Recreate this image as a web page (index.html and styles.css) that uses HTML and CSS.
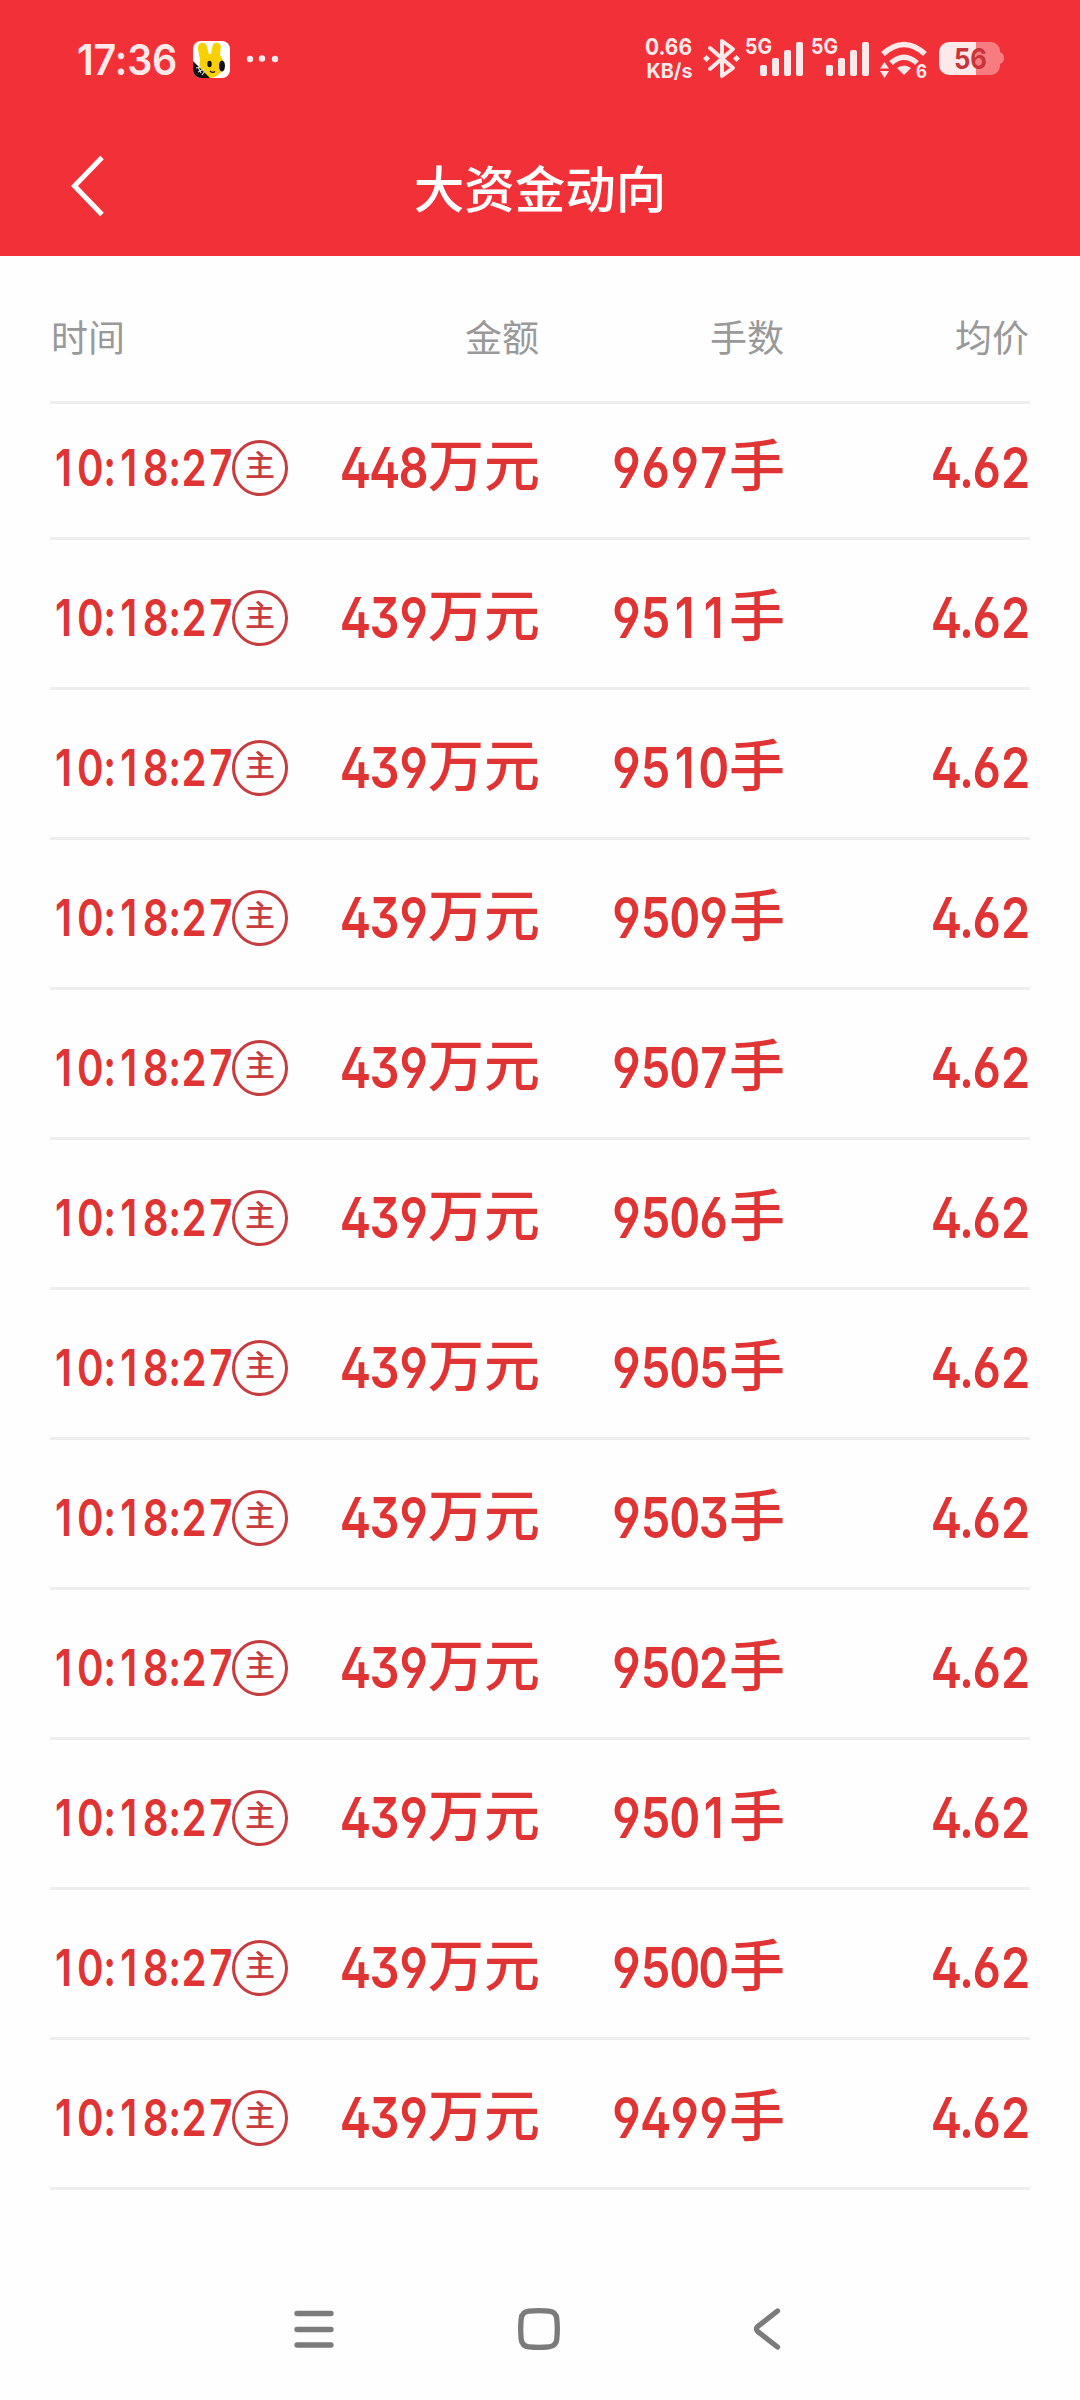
FILE: index.html
```html
<!DOCTYPE html>
<html lang="zh-CN">
<head>
<meta charset="utf-8">
<title>大资金动向</title>
<link rel="stylesheet" href="styles.css">
</head>
<body>
<header class="top">
  <div class="status">
    <span class="clock">17:36</span>
    <svg class="app" width="37" height="37" viewBox="0 0 37 37">
      <defs><clipPath id="r"><rect width="37" height="37" rx="8"/></clipPath></defs>
      <g clip-path="url(#r)">
        <rect width="37" height="37" fill="#fff"/>
        <path d="M7 19C6 13 5 9 5 6.500a4.500 4.500 0 0 1 9-.5l2 7h2l1.500-8a4.200 4.200 0 0 1 8.300.8L27 14c4 5 5 12 1 17-3 4-7 6-12 6C9 37 5 28 7 19z" fill="#f9cf05"/>
        <ellipse cx="16.500" cy="23" rx="2.200" ry="3.200" fill="#111"/>
        <ellipse cx="29" cy="25" rx="3" ry="5.500" fill="#111"/>
        <path d="M17 30q2.500 2.500 5 .5" fill="none" stroke="#111" stroke-width="1.300"/>
        <path d="M0 20 17 37H0z" fill="#111"/>
        <path d="M3 27l5-1M5 31l6-3M9 34l3-4M5 26l3 6" stroke="#ddd" stroke-width="1.100"/>
      </g>
    </svg>
    <svg class="dots" width="33" height="8" viewBox="0 0 33 8"><circle cx="4" cy="4" r="3.200"/><circle cx="16" cy="3.500" r="3.200"/><circle cx="29" cy="4" r="3.200"/></svg>
    <svg class="speed" width="52" height="60" viewBox="-1 -10 52 60"><text x="0" y="17.500" font-size="23" textLength="47" lengthAdjust="spacingAndGlyphs">0.66</text><text x="1.500" y="40.500" font-size="20" textLength="46" lengthAdjust="spacingAndGlyphs">KB/s</text></svg>
    <svg class="bt" width="38" height="42" viewBox="0 0 38 42"><path d="M7 10 30 30 19 38V3l11 8L7 31" fill="none" stroke="#fee9ea" stroke-width="4" stroke-linejoin="round" stroke-linecap="round"/><path d="M3.500 17 7 20.500 3.500 24 0 20.500zM33.500 17 37 20.500 33.500 24 30 20.500z"/></svg>
    <svg class="sig" width="59" height="52" viewBox="0 -10 59 52"><text x="0" y="16.500" font-size="22" textLength="27" lengthAdjust="spacingAndGlyphs">5G</text><rect x="15" y="28" width="7" height="11" rx="2"/><rect x="27" y="21" width="7" height="18" rx="2"/><rect x="39" y="13" width="7" height="26" rx="2"/><rect x="51" y="5" width="7" height="34" rx="2"/></svg>
    <svg class="sig" width="59" height="52" viewBox="0 -10 59 52"><text x="0" y="16.500" font-size="22" textLength="27" lengthAdjust="spacingAndGlyphs">5G</text><rect x="15" y="28" width="7" height="11" rx="2"/><rect x="27" y="21" width="7" height="18" rx="2"/><rect x="39" y="13" width="7" height="26" rx="2"/><rect x="51" y="5" width="7" height="34" rx="2"/></svg>
    <svg class="wifi" width="48" height="46" viewBox="0 0 48 46"><g fill="none" stroke="#fee9ea" stroke-width="5.500"><path d="M3 13Q24-6 45 13"/><path d="M11 22Q24 10.500 37 22"/></g><path d="M17 27q7-5 14 0l-7 7zM0 27.500 4.500 21 9 27.500zM0 30h9l-4.500 7z"/><text x="36" y="36.500" font-size="19" textLength="11" lengthAdjust="spacingAndGlyphs">6</text></svg>
    <svg class="battery" width="66" height="36" viewBox="0 0 66 36"><path d="M37 1h15a9 9 0 0 1 9 9v1c3 1 4 3 4 6s-1 5-4 6v2a9 9 0 0 1-9 9H37z" fill="#f77c80"/><path d="M37 1H10a10 10 0 0 0-10 10v13a10 10 0 0 0 10 10h27z"/><text class="pct" x="15" y="27.500" font-size="28" textLength="33" lengthAdjust="spacingAndGlyphs">56</text></svg>
  </div>
  <nav class="bar">
    <svg class="back" width="40" height="66" viewBox="0 0 40 66"><path d="M35 4.500 7.500 33 35 61.500" fill="none" stroke="#fff" stroke-width="5"/></svg>
    <h1>大资金动向</h1>
  </nav>
</header>
<main>
  <div class="head"><span>时间</span><span>金额</span><span>手数</span><span>均价</span></div>
  <div id="rows"></div>
</main>
<footer class="keys">
  <svg width="42" height="42" viewBox="0 0 42 42"><path d="M4 5.500H38M4 21.500H38M4 37H38"/></svg>
  <svg width="42" height="42" viewBox="0 0 42 42"><path d="M11 3.200Q21 2.200 31 3.200Q38.200 3.800 38.800 11Q39.800 21 38.800 31Q38.200 38.200 31 38.800Q21 39.800 11 38.800Q3.800 38.200 3.200 31Q2.200 21 3.200 11Q3.800 3.800 11 3.200z"/></svg>
  <svg width="28" height="42" viewBox="0 0 28 42"><path d="M24.500 3 5 18.200Q2 21 5 23.800L24.500 39"/></svg>
</footer>
<script src="rows.js"></script>
</body>
</html>
```
FILE: rows.js
```js
const trades = [
  [448, 9697], [439, 9511], [439, 9510], [439, 9509], [439, 9507], [439, 9506],
  [439, 9505], [439, 9503], [439, 9502], [439, 9501], [439, 9500], [439, 9499]
];
// Every digit sits in a cell of equal width; punctuation gets a narrow one.
const cells = text => [...String(text)]
  .map(c => `<b${/\d/.test(c) ? '' : ' class="mark"'}>${c}</b>`).join('');
document.getElementById('rows').innerHTML = trades.map(([amount, lots]) => `
  <div class="row">
    <div class="time"><span class="narrow">${cells('10:18:27')}</span><i class="main">主</i></div>
    <div class="cell"><span class="num">${cells(amount)}</span><span class="unit">万元</span></div>
    <div class="cell"><span class="num">${cells(lots)}</span><span class="unit">手</span></div>
    <div class="cell"><span class="num price">${cells('4.62')}</span></div>
  </div>`).join('');
```
FILE: styles.css
```css
* { box-sizing: border-box; }
body {
  margin: 0;
  width: 1080px;
  height: 2400px;
  display: flex;
  flex-direction: column;
  background: #fefefe;
  font-family: Inter, "Noto Sans CJK SC", sans-serif;
}
.top { height: 256px; background: #f23037; }
.status {
  height: 116px;
  padding: 37px 0 0 77px;
  display: flex;
  align-items: flex-start;
  color: #fee9ea;
  fill: #fee9ea;
}
.status svg { flex: none; }
.status text { font-weight: 700; }
.clock {
  width: 116px;
  font-size: 42px;
  line-height: 46px;
  font-weight: 600;
  letter-spacing: -.2px;
  white-space: nowrap;
  transform: scaleX(.94);
  transform-origin: 0 0;
}
.app { margin-top: 4px; }
.dots { margin: 18px 0 0 16px; }
.speed { margin: -10px 0 0 365px; }
.bt { margin: 1px 0 0 7px; }
.sig { margin: -10px 0 0 4px; }
.sig + .sig { margin-left: 7px; }
.wifi { margin: 4px 0 0 10px; }
.battery { margin: 4px 0 0 11px; }
.pct { fill: #c9333a; }
.bar { height: 140px; display: flex; align-items: flex-start; }
.back { margin: 37px 0 0 67px; }
.bar h1 {
  margin: 37px 0 0;
  width: 866px;
  text-align: center;
  color: #fff;
  font-size: 50.5px;
  line-height: 74px;
  font-weight: 500;
}
main { padding: 0 50px; flex: 1; }
.head {
  height: 148px;
  padding-top: 55px;
  border-bottom: 3px solid #eee;
  display: grid;
  grid-template-columns: repeat(4, 1fr);
  font-size: 37px;
  line-height: 56px;
  color: #999;
  text-align: right;
}
.head span { padding-right: 1px; }
.head span:first-child { text-align: left; padding-left: 1px; }
.row {
  height: 150px;
  padding-top: 43px;
  border-bottom: 3px solid #eee;
  display: grid;
  grid-template-columns: repeat(4, 245px);
  color: #e03333;
  font-size: 56px;
  line-height: 70px;
  font-weight: 500;
  white-space: nowrap;
}
.row:first-child { height: 136px; padding-top: 29px; }
.cell { display: flex; justify-content: flex-end; align-items: baseline; }
.num, .narrow {
  flex: none;
  display: flex;
  font-weight: 600;
  font-feature-settings: "ss01", "cv03", "cv04";
  transform-origin: 0 0;
}
.num { width: 87px; transform: scaleX(.84); }
.num b, .narrow b { flex: none; font-weight: inherit; display: flex; justify-content: center; }
.num b { width: 34.6px; }
.num .mark { width: 13.2px; }
.cell:nth-child(3) .num { width: 117px; }
.price { width: 98px; }
.unit { transform: translateY(-2px); }
.time { display: flex; align-items: baseline; }
.narrow {
  width: 182px;
  font-size: 51px;
  font-feature-settings: normal;
  transform: scaleX(.79);
}
.narrow b { width: 34.1px; }
.narrow .mark { width: 14.4px; }
.main {
  flex: none;
  width: 56px;
  height: 56px;
  margin-top: 7px;
  border: 3px solid #c73c3f;
  border-radius: 50%;
  color: #c73c3f;
  font-style: normal;
  font-size: 30px;
  line-height: 45px;
  font-weight: 500;
  text-align: center;
  align-self: flex-start;
}
.keys {
  height: 92px;
  padding-left: 293px;
  display: flex;
  align-items: flex-start;
}
.keys svg { fill: none; stroke: #7b7b7b; stroke-width: 5.300; stroke-linecap: round; }
.keys svg:nth-child(2) { margin-left: 183px; }
.keys svg:nth-child(3) { margin-left: 193px; }
```
